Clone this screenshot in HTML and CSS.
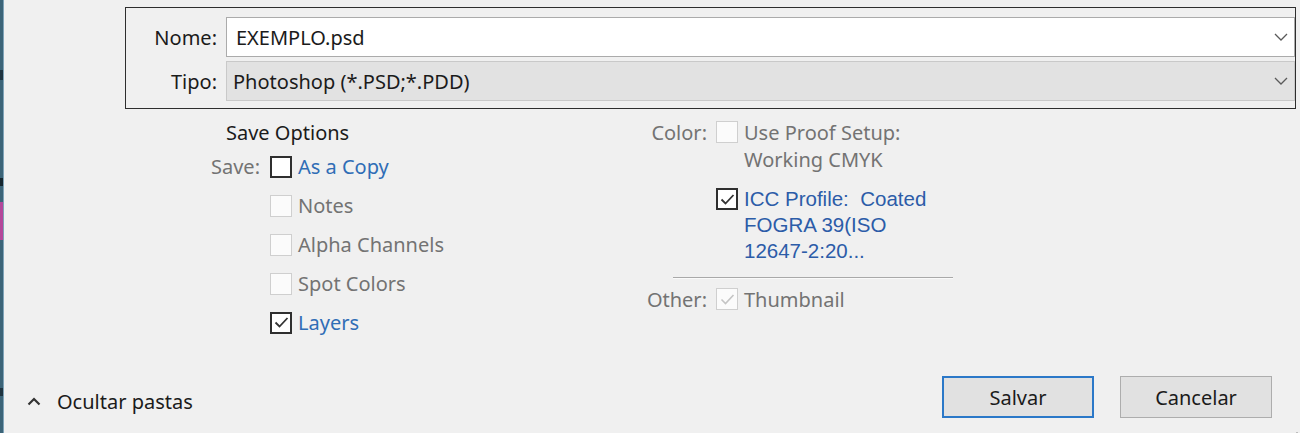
FILE: index.html
```html
<!DOCTYPE html>
<html lang="pt">
<head>
<meta charset="utf-8">
<title>Salvar como</title>
<link rel="stylesheet" href="styles.css">
</head>
<body>
<div class="screen">
  <div class="edge"></div>
  <div class="dialog">
    <div class="filebox">
      <div class="filegrid">
        <label class="flabel">Nome:</label>
        <div class="field field-name">
          <span class="fval">EXEMPLO.psd</span>
          <svg class="chev" width="14" height="8" viewBox="0 0 14 8"><path d="M1 1 L7 7 L13 1" fill="none" stroke="#5a5a5a" stroke-width="1.3"/></svg>
        </div>
        <label class="flabel">Tipo:</label>
        <div class="field field-type">
          <span class="fval tval">Photoshop (*.PSD;*.PDD)</span>
          <svg class="chev" width="14" height="8" viewBox="0 0 14 8"><path d="M1 1 L7 7 L13 1" fill="none" stroke="#5a5a5a" stroke-width="1.3"/></svg>
        </div>
      </div>
    </div>

    <div class="options">
      <div class="col-left">
        <div class="heading">Save Options</div>
        <div class="orow">
          <span class="olabel">Save:</span>
          <span class="cb"></span>
          <span class="otext blue">As a Copy</span>
        </div>
        <div class="orow">
          <span class="olabel"></span>
          <span class="cb dis"></span>
          <span class="otext gray">Notes</span>
        </div>
        <div class="orow">
          <span class="olabel"></span>
          <span class="cb dis"></span>
          <span class="otext gray">Alpha Channels</span>
        </div>
        <div class="orow">
          <span class="olabel"></span>
          <span class="cb dis"></span>
          <span class="otext gray">Spot Colors</span>
        </div>
        <div class="orow">
          <span class="olabel"></span>
          <span class="cb"><svg width="17" height="17" viewBox="0 0 17 17"><path d="M2.5 8.5 L6.5 12.5 L14.5 4" fill="none" stroke="#333" stroke-width="1.8"/></svg></span>
          <span class="otext blue">Layers</span>
        </div>
      </div>

      <div class="col-right">
        <div class="rrow">
          <span class="rlabel">Color:</span>
          <span class="cb dis"></span>
          <span class="rtext gray">Use Proof Setup:<br>Working CMYK</span>
        </div>
        <div class="rrow icc">
          <span class="rlabel"></span>
          <span class="cb"><svg width="17" height="17" viewBox="0 0 17 17"><path d="M2.5 8.5 L6.5 12.5 L14.5 4" fill="none" stroke="#333" stroke-width="1.8"/></svg></span>
          <span class="rtext arial">ICC Profile:&nbsp; Coated<br>FOGRA 39(ISO<br>12647-2:20...</span>
        </div>
        <div class="sep"></div>
        <div class="rrow other">
          <span class="rlabel">Other:</span>
          <span class="cb dis"><svg width="17" height="17" viewBox="0 0 17 17"><path d="M2.5 8.5 L6.5 12.5 L14.5 4" fill="none" stroke="#c4c4c4" stroke-width="1.6"/></svg></span>
          <span class="rtext gray">Thumbnail</span>
        </div>
      </div>
    </div>

    <div class="footer">
      <div class="toggle">
        <svg width="14" height="9" viewBox="0 0 14 9"><path d="M1.5 7.5 L7 2 L12.5 7.5" fill="none" stroke="#333" stroke-width="2.2"/></svg>
        <span>Ocultar pastas</span>
      </div>
      <div class="buttons">
        <button class="btn primary">Salvar</button>
        <button class="btn">Cancelar</button>
      </div>
    </div>
  </div>
  <div class="grip">
    <svg width="12" height="12" viewBox="0 0 12 12" fill="#bdbdbd">
      <rect x="8" y="2" width="2" height="2"/>
      <rect x="4" y="6" width="2" height="2"/><rect x="8" y="6" width="2" height="2"/>
      <rect x="0" y="10" width="2" height="2"/><rect x="4" y="10" width="2" height="2"/><rect x="8" y="10" width="2" height="2"/>
    </svg>
  </div>
</div>
</body>
</html>
```

FILE: styles.css
```css
* { box-sizing: border-box; }

html, body {
  margin: 0;
  padding: 0;
  background: #f0f0f0;
}

body {
  font-family: "Noto Sans", "Open Sans", sans-serif;
  font-size: 20px;
  color: #1b1b1b;
}

.screen {
  position: relative;
  width: 1300px;
  height: 433px;
  overflow: hidden;
  display: flex;
}

.edge {
  width: 4px;
  flex: none;
  background:
    linear-gradient(to bottom,
      #3c6478 0, #3c6478 70px, #1f3440 70px, #1f3440 80px,
      #3c6478 80px, #3c6478 178px, #16262e 178px, #16262e 186px,
      #3c6478 186px, #3c6478 202px, #b4479a 202px, #b4479a 240px,
      #3c6478 240px, #3c6478 388px, #1f3440 388px, #1f3440 396px,
      #3c6478 396px);
  border-right: 1px solid #7fa3b8;
}

.dialog {
  flex: 1;
  display: flex;
  flex-direction: column;
}

/* ---- file name box ---- */
.filebox {
  margin: 7px 4px 0 121px;
  border: 1px solid #2e2e2e;
  padding: 9px 0 6px 0;
  height: 102px;
}

.filegrid {
  display: grid;
  grid-template-columns: 100px 1fr;
  row-gap: 4px;
  align-items: center;
}

.flabel {
  text-align: right;
  padding-right: 9px;
  color: #1b1b1b;
}

.field {
  height: 40px;
  display: flex;
  align-items: center;
  justify-content: space-between;
  padding: 0 6px 0 9px;
  border: 1px solid #ababab;
}

.field-name { background: #ffffff; }
.field-type { background: #e2e2e2; border-color: #c9c9c9; padding-left: 6px; }

.chev { flex: none; }

/* ---- options ---- */
.options {
  display: flex;
  margin-top: 10px;
  height: 246px;
}

.col-left {
  width: 438px;
  margin-left: 193px;
}

.heading {
  margin-left: 29px;
  height: 28px;
  line-height: 28px;
  color: #1b1b1b;
}

.orow {
  display: flex;
  align-items: center;
  height: 39px;
}

.olabel {
  width: 63px;
  text-align: right;
  color: #737373;
  flex: none;
}

.cb {
  width: 22px;
  height: 22px;
  flex: none;
  border: 2px solid #2f2f2f;
  background: #ffffff;
  display: flex;
  align-items: center;
  justify-content: center;
}

.orow .cb { margin-left: 10px; margin-right: 6px; }

.cb.dis {
  border: 1px solid #cfcfcf;
  background: #fbfbfb;
}

.otext { white-space: nowrap; }
.blue { color: #2f6db6; }
.gray { color: #737373; }

.col-right {
  width: 330px;
  padding-top: 0;
}

.rrow {
  display: flex;
  align-items: flex-start;
}

.rlabel {
  width: 72px;
  text-align: right;
  color: #737373;
  line-height: 27px;
  flex: none;
}

.rrow .cb { margin-left: 9px; margin-right: 6px; margin-top: 2px; }

.rtext {
  line-height: 27px;
  white-space: nowrap;
}

.rrow.icc { margin-top: 13px; }

.arial {
  font-family: "Liberation Sans", Arial, sans-serif;
  font-size: 20.5px;
  line-height: 26px;
  color: #2c5ca8;
}

.sep {
  margin: 13px 0 7px 38px;
  width: 280px;
  height: 2px;
  background: #a9a9a9;
  border-bottom: 1px solid #fafafa;
}

/* ---- footer ---- */
.footer {
  display: flex;
  align-items: flex-start;
  justify-content: space-between;
  padding: 0 28px 0 23px;
  margin-top: 11px;
  height: 42px;
}

.toggle {
  display: flex;
  align-items: center;
  gap: 16px;
  color: #1b1b1b;
  margin-top: 12px;
}

.buttons {
  display: flex;
  gap: 26px;
}

.btn {
  width: 152px;
  height: 42px;
  font-family: "Noto Sans", "Open Sans", sans-serif;
  font-size: 20px;
  color: #1b1b1b;
  background: #e1e1e1;
  border: 1px solid #adadad;
  padding: 0;
}

.btn.primary {
  border: 2px solid #2b78c8;
}

.grip {
  position: absolute;
  right: 0;
  bottom: 0;
  width: 12px;
  height: 12px;
}
```
